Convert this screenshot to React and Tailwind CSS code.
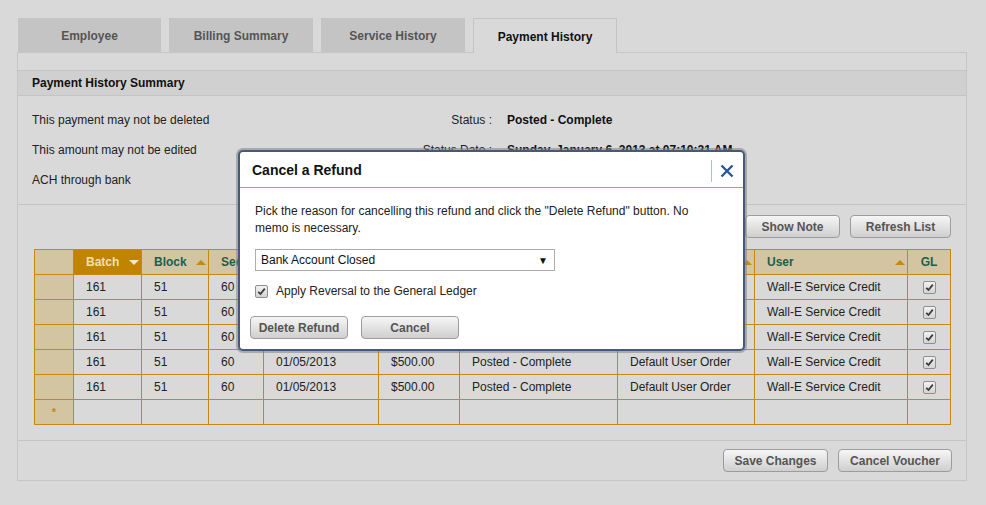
import React from "react";

const font = "font-['Liberation_Sans',Arial,sans-serif]";

const GrayButton = ({ children, className = "" }) => (
  <button
    className={`h-[23px] rounded-[4px] border border-[#9c9c9c] bg-linear-to-b from-[#f6f6f6] to-[#cfcfcf] text-[12px] font-bold text-[#555] leading-none ${className}`}
  >
    {children}
  </button>
);

const Check = () => (
  <span className="inline-flex h-[13px] w-[13px] items-center justify-center rounded-[2px] border border-[#8f8f8f] bg-linear-to-b from-[#f2f2f2] to-[#d4d4d4]">
    <svg width="9" height="9" viewBox="0 0 9 9">
      <path d="M1.2 4.8 L3.5 7 L7.8 1.6" fill="none" stroke="#3c3c3c" strokeWidth="1.8" />
    </svg>
  </span>
);

const Arrow = ({ up, color }) => (
  <svg width="10" height="5" viewBox="0 0 10 5" className="shrink-0">
    {up ? <path d="M0 5 L5 0 L10 5 Z" fill={color} /> : <path d="M0 0 L5 5 L10 0 Z" fill={color} />}
  </svg>
);

const cols = [
  { name: "", w: 39 },
  { name: "Batch", w: 68, active: true },
  { name: "Block", w: 67, arrow: true },
  { name: "Seq", w: 55 },
  { name: "Date", w: 115 },
  { name: "Amount", w: 81 },
  { name: "Status", w: 158 },
  { name: "Source", w: 137, arrow: true },
  { name: "User", w: 153, arrow: true },
  { name: "GL", w: 43, center: true },
];

const row = ["161", "51", "60", "01/05/2013", "$500.00", "Posted - Complete", "Default User Order", "Wall-E Service Credit"];
const rows = [row, row, row, row, row];

const tabs = [
  { t: "Employee", w: "w-[143px]" },
  { t: "Billing Summary", w: "w-[144px]" },
  { t: "Service History", w: "w-[144px]" },
];

export default function App() {
  return (
    <div className={`${font} relative h-[505px] w-[986px] overflow-hidden bg-[#d9d9d9] pt-[18px] pl-[17px] text-[12px] text-[#222]`}>
      {/* tabs */}
      <div className="relative z-10 ml-[1px] flex gap-2">
        {tabs.map(({ t, w }) => (
          <div key={t} className={`flex h-[34px] ${w} items-center justify-center pt-[2px] font-bold text-[#555]  bg-[#c4c4c4]`}>
            {t}
          </div>
        ))}
        <div className="mb-[-1px] flex h-[35px] w-[144px] items-center justify-center border border-b-0 border-[#c4c4c4] bg-[#d9d9d9] pt-[2px] font-bold text-[#111]">
          Payment History
        </div>
      </div>

      {/* panel */}
      <div className="w-[950px] border border-[#c6c6c6]">
        <div className="h-[17px]" />
        <div className="flex h-[26px] items-center border-y border-[#c4c4c4] bg-[#d0d0d0] pl-[14px] font-bold text-[#111]">
          Payment History Summary
        </div>

        <div className="border-b border-[#c4c4c4] pt-[9px] pb-[9px] pl-[14px]">
          <div className="flex h-[30px] items-center">
            <span className="w-[386px]">This payment may not be deleted</span>
            <span className="w-[74px] text-right">Status :</span>
            <span className="ml-[15px] font-bold text-[#111]">Posted - Complete</span>
          </div>
          <div className="flex h-[30px] items-center">
            <span className="w-[386px]">This amount may not be edited</span>
            <span className="w-[74px] text-right">Status Date :</span>
            <span className="ml-[15px] font-bold text-[#111]">Sunday, January 6, 2013 at 07:10:21 AM</span>
          </div>
          <div className="flex h-[30px] items-center">
            <span>ACH through bank</span>
          </div>
        </div>

        <div className="px-[15px] pt-[10px]">
          <div className="flex justify-end gap-[10px]">
            <GrayButton className="w-[95px]">Show Note</GrayButton>
            <GrayButton className="w-[101px]">Refresh List</GrayButton>
          </div>

          <table className="mt-[11px] ml-[1px] table-fixed border-collapse">
            <colgroup>
              {cols.map((c, i) => (
                <col key={i} style={{ width: c.w }} />
              ))}
            </colgroup>
            <thead>
              <tr className="h-[25px]">
                {cols.map((c, i) => (
                  <th
                    key={i}
                    className={`border border-[#c38a0e] p-0 font-bold ${
                      c.active ? "bg-[#c18400] text-[#f1dfb6]" : "bg-[#d4c5a2] text-[#1d5e4c]"
                    }`}
                  >
                    {c.name && (
                      <div className={`flex w-full items-center ${c.center ? "justify-center" : "justify-between pl-[12px] pr-[2px]"}`}>
                        <span>{c.name}</span>
                        {c.active && <Arrow color="#f3e6c8" />}
                        {c.arrow && <Arrow up color="#c38a0e" />}
                      </div>
                    )}
                  </th>
                ))}
              </tr>
            </thead>
            <tbody>
              {rows.map((r, ri) => (
                <tr key={ri} className="h-[25px]">
                  <td className="border border-[#c38a0e] bg-[#d4c5a2]" />
                  {r.map((v, ci) => (
                    <td key={ci} className="truncate border border-[#c38a0e] pl-[12px]">
                      {v}
                    </td>
                  ))}
                  <td className="border border-[#c38a0e] text-center">
                    <div className="flex justify-center pt-[1px]">
                      <Check />
                    </div>
                  </td>
                </tr>
              ))}
              <tr className="h-[25px]">
                <td className="border border-[#c38a0e] bg-[#d4c5a2] text-center text-[11px] font-bold text-[#c38a0e]">*</td>
                {cols.slice(1).map((c, i) => (
                  <td key={i} className="border border-[#c38a0e]" />
                ))}
              </tr>
            </tbody>
          </table>
        </div>

        <div className="mt-[15px] flex justify-end gap-[10px] border-t border-[#c4c4c4] pt-[8px] pr-[14px] pb-[8px]">
          <GrayButton className="w-[105px]">Save Changes</GrayButton>
          <GrayButton className="w-[114px]">Cancel Voucher</GrayButton>
        </div>
      </div>

      {/* modal */}
      <div className="absolute top-[150px] left-[238px] z-20 h-[201px] w-[507px] rounded-[5px] border-2 border-[#435a7c] bg-white shadow-[0_0_0_2px_rgba(130,130,130,0.55)]">
        <div className="flex h-[36px] items-center border-b border-[#d79d18] pt-[2px] pl-[12px]">
          <span className="text-[14px] font-bold text-[#111]">Cancel a Refund</span>
          <div className="ml-auto flex h-full items-center">
            <span className="h-[22px] w-px bg-[#a9c1dd]" />
            <svg width="14" height="14" viewBox="0 0 14 14" className="mr-[9px] ml-[8px]">
              <path d="M1.5 1.5 L12.5 12.5 M12.5 1.5 L1.5 12.5" stroke="#2a5592" strokeWidth="2.4" />
            </svg>
          </div>
        </div>
        <div className="pt-[15px] pl-[15px]">
          <p className="w-[470px] leading-[17px] text-[#222]">
            Pick the reason for cancelling this refund and click the "Delete Refund" button. No memo is necessary.
          </p>
          <div className="mt-[12px] flex h-[22px] w-[300px] items-center justify-between border border-[#ababab] bg-white pr-[6px] pl-[5px] text-[#111]">
            <span>Bank Account Closed</span>
            <span className="text-[10px]">▼</span>
          </div>
          <div className="mt-[12px] flex h-[16px] items-center gap-[8px]">
            <Check />
            <span>Apply Reversal to the General Ledger</span>
          </div>
        </div>
        <div className="mt-[17px] flex gap-[13px] pl-[10px]">
          <GrayButton className="w-[98px]">Delete Refund</GrayButton>
          <GrayButton className="w-[98px]">Cancel</GrayButton>
        </div>
      </div>
    </div>
  );
}
